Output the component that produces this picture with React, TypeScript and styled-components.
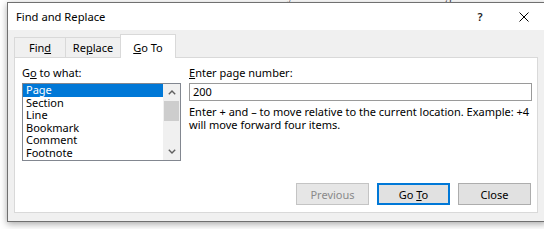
import React from 'react'
import styled, { createGlobalStyle } from 'styled-components'

const GlobalStyle = createGlobalStyle`
  html, body {
    margin: 0;
    padding: 0;
    background: #fff;
    overflow: hidden;
  }
  body {
    font-family: "Noto Sans", "Open Sans", sans-serif;
    font-size: 11px;
    color: #000;
  }
`

const Screen = styled.div`
  width: 544px;
  height: 229px;
  overflow: hidden;
  background: #fff;
`

const DocPeek = styled.div`
  height: 2px;
  overflow: hidden;
  padding-left: 135px;
  font-family: "Liberation Serif", serif;
  font-size: 12px;
  color: #444;
  white-space: nowrap;
`

const DocLine = styled.div`
  margin-top: -10px;
  line-height: 12px;
`

const Dialog = styled.div`
  margin-left: 7px;
  width: 538px;
  border: 1px solid #707070;
  background: #f0f0f0;
  box-shadow: 0 2px 7px rgba(0, 0, 0, 0.35);
`

const TitleBar = styled.div`
  height: 27px;
  background: #fff;
  display: flex;
  align-items: center;
  padding-left: 8px;
  font-size: 11.2px;
`

const TitleText = styled.span`
  flex: 1;
`

const CaptionButton = styled.div`
  width: 44px;
  height: 27px;
  display: flex;
  align-items: center;
  justify-content: center;
  font-size: 11px;
  font-weight: 600;
  color: #222;
`

const Body = styled.div`
  padding: 4px 8px 8px 6px;
`

const TabRow = styled.div`
  display: flex;
  align-items: flex-end;
  height: 23px;
`

const Tab = styled.div<{ $active?: boolean; $w: number }>`
  position: relative;
  z-index: ${p => (p.$active ? 1 : 0)};
  width: ${p => p.$w}px;
  height: ${p => (p.$active ? 24 : 20)}px;
  margin-bottom: ${p => (p.$active ? -1 : 0)}px;
  margin-left: -1px;
  &:first-child { margin-left: 0; }
  box-sizing: border-box;
  border: 1px solid #d9d9d9;
  border-bottom: none;
  background: ${p => (p.$active ? '#fff' : '#f0f0f0')};
  display: flex;
  align-items: center;
  justify-content: center;
  padding-top: ${p => (p.$active ? 1 : 0)}px;
`

const Panel = styled.div`
  box-sizing: border-box;
  height: 156px;
  background: #fff;
  border: 1px solid #d9d9d9;
  padding: 8px 5px 7px 7px;
  display: flex;
  flex-direction: column;
`

const Columns = styled.div`
  display: grid;
  grid-template-columns: 159px 1fr;
  column-gap: 8px;
`

const Label = styled.div`
  line-height: 14px;
  margin-bottom: 3px;
`

const ListBox = styled.div`
  box-sizing: border-box;
  height: 78px;
  border: 1px solid #828790;
  display: flex;
`

const Items = styled.div`
  flex: 1;
  overflow: hidden;
`

const Item = styled.div<{ $selected?: boolean }>`
  height: 12.6px;
  line-height: 12.6px;
  padding-left: 3px;
  white-space: nowrap;
  background: ${p => (p.$selected ? '#0078d7' : 'transparent')};
  color: ${p => (p.$selected ? '#fff' : '#000')};
`

const ScrollBar = styled.div`
  width: 17px;
  background: #f0f0f0;
  display: flex;
  flex-direction: column;
`

const ScrollArrow = styled.div`
  height: 17px;
  display: flex;
  align-items: center;
  justify-content: center;
`

const Thumb = styled.div`
  height: 20px;
  margin: 0 1px;
  background: #cdcdcd;
`

const Track = styled.div`
  flex: 1;
`

const TextBox = styled.div`
  box-sizing: border-box;
  height: 18px;
  border: 1px solid #9a9a9a;
  padding-left: 3px;
  line-height: 16px;
`

const Hint = styled.div`
  margin-top: 4px;
  line-height: 13px;
`

const ButtonRow = styled.div`
  margin-top: auto;
  display: flex;
  justify-content: flex-end;
  gap: 8px;
  padding-right: 1px;
`

const Button = styled.div<{ $default?: boolean; $disabled?: boolean }>`
  box-sizing: border-box;
  width: 73px;
  height: 22px;
  display: flex;
  align-items: center;
  justify-content: center;
  background: ${p => (p.$disabled ? '#e6e6e6' : '#e1e1e1')};
  border: ${p => (p.$default ? '2px solid #0078d7' : p.$disabled ? '1px solid #c4c4c4' : '1px solid #adadad')};
  color: ${p => (p.$disabled ? '#8a8a8a' : '#000')};
`

const Chevron = ({ up }: { up?: boolean }) => (
  <svg width="8" height="5" viewBox="0 0 8 5">
    <path
      d={up ? 'M0.8 4.2 L4 1 L7.2 4.2' : 'M0.8 0.8 L4 4 L7.2 0.8'}
      fill="none"
      stroke="#606060"
      strokeWidth="1.4"
    />
  </svg>
)

const items = ['Page', 'Section', 'Line', 'Bookmark', 'Comment', 'Footnote']

export default function App() {
  return (
    <Screen>
      <GlobalStyle />
      <DocPeek>
        <DocLine>the sections of a document that you want to review before sharing it with the team</DocLine>
      </DocPeek>
      <Dialog>
        <TitleBar>
          <TitleText>Find and Replace</TitleText>
          <CaptionButton>?</CaptionButton>
          <CaptionButton>
            <svg width="10" height="10" viewBox="0 0 10 10">
              <path d="M0.5 0.5 L9.5 9.5 M9.5 0.5 L0.5 9.5" stroke="#000" strokeWidth="1" fill="none" />
            </svg>
          </CaptionButton>
        </TitleBar>
        <Body>
          <TabRow>
            <Tab $w={52}><span>Fin<u>d</u></span></Tab>
            <Tab $w={56}><span>Re<u>p</u>lace</span></Tab>
            <Tab $w={56} $active><span><u>G</u>o To</span></Tab>
          </TabRow>
          <Panel>
            <Columns>
              <div>
                <Label>G<u>o</u> to what:</Label>
                <ListBox>
                  <Items>
                    {items.map((it, i) => (
                      <Item key={it} $selected={i === 0}>{it}</Item>
                    ))}
                  </Items>
                  <ScrollBar>
                    <ScrollArrow><Chevron up /></ScrollArrow>
                    <Thumb />
                    <Track />
                    <ScrollArrow><Chevron /></ScrollArrow>
                  </ScrollBar>
                </ListBox>
              </div>
              <div>
                <Label><u>E</u>nter page number:</Label>
                <TextBox>200</TextBox>
                <Hint>
                  Enter + and – to move relative to the current location. Example: +4
                  <br />
                  will move forward four items.
                </Hint>
              </div>
            </Columns>
            <ButtonRow>
              <Button $disabled>Previous</Button>
              <Button $default><span>Go <u>T</u>o</span></Button>
              <Button>Close</Button>
            </ButtonRow>
          </Panel>
        </Body>
      </Dialog>
    </Screen>
  )
}
